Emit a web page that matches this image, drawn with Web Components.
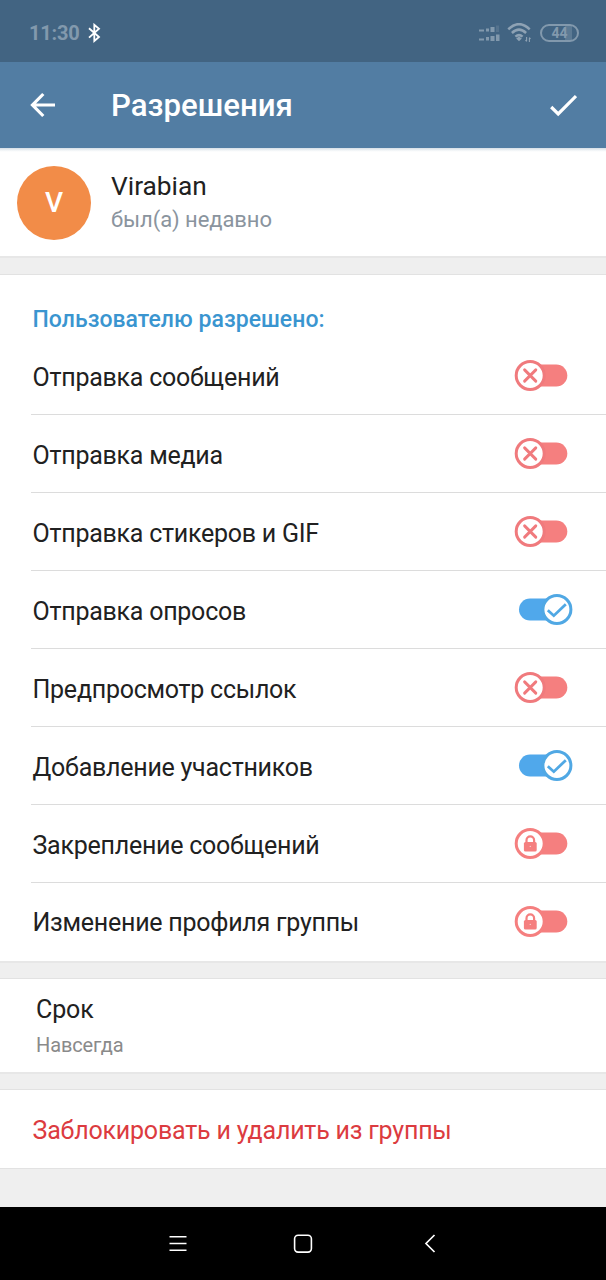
<!DOCTYPE html>
<html lang="ru">
<head>
<meta charset="utf-8">
<title>Разрешения</title>
<style>
  body {
    margin: 0;
    background: #efefef;
    font-family: Roboto, "Noto Sans", sans-serif;
    color: #212121;
  }
</style>
</head>
<body>
<permissions-screen></permissions-screen>

<script>
function makeTemplate(html) {
  const template = document.createElement("template");
  template.innerHTML = html;
  return template;
}

class BaseElement extends HTMLElement {
  constructor() {
    super();
    this._root = this.attachShadow({ mode: "open" });
    this._root.appendChild(this.constructor.template.content.cloneNode(true));
  }
}

class StatusBar extends BaseElement {
  static template = makeTemplate(`
<style>
:host {
  display: flex;
  align-items: center;
  box-sizing: border-box;
  height: 62px;
  padding: 4px 27px 0 29px;
  background: #426482;
  color: #8299ad;
}
svg { display: block; }
.time {
  font-size: 20px;
  font-weight: 700;
  line-height: 24px;
  letter-spacing: -0.2px;
  flex: none;
  width: 59px;
}
.icons {
  display: flex;
  align-items: center;
  margin-left: auto;
}
.battery {
  box-sizing: border-box;
  width: 39px;
  height: 18px;
  margin-left: 8px;
  border: 2px solid #8299ad;
  border-radius: 9px;
  font-size: 14px;
  font-weight: 700;
  line-height: 15px;
  text-align: center;
  background: linear-gradient(90deg, transparent 66%, #5c7a94 66%, #5c7a94 86%, transparent 86%);
}
</style>
<span class="time">11:30</span>
<svg width="13" height="20" viewBox="0 0 13 20" fill="none" stroke="#fff" stroke-width="1.8" stroke-linejoin="miter">
  <path d="M1 5.2L11 14L6.3 18V1.8L11 5.8L1 14.6"/>
</svg>
<div class="icons">
  <svg width="22" height="18" viewBox="0 0 22 18" fill="#8299ad">
    <path d="M1 5.500h5v2H1zM8 4.500h3v3H8zM12.500 3h4v5h-4zM1 14.500h5v2H1zM8 13h3v3.500H8zM12.500 12h4v5h-4zM18 10.500h3.500V17H18z"/>
    <path d="M18 1.500h3V8h-3z" fill="#55738e"/>
  </svg>
  <svg style="margin-left: 7px" width="25" height="20" viewBox="0 0 25 20" fill="none" stroke="#8ea2b4" stroke-width="2.500">
    <path d="M1.300 6.300Q12 -4 22.700 6.300M4.900 10Q12 3.300 19.100 10M8.400 13.600Q12 10.600 15.600 13.600"/>
    <path d="M12 13.600l2.800 2L12 18.200l-2.800-2.600z" fill="#8ea2b4" stroke="none"/>
    <path d="M19.600 14v4M18.500 17l1.100 1.500M22.400 15v4M22.400 14.500l1.100 1.500" stroke-width="1.100"/>
  </svg>
  <div class="battery">44</div>
</div>
`);
}
customElements.define("status-bar", StatusBar);

class AppBar extends BaseElement {
  static template = makeTemplate(`
<style>
:host {
  display: flex;
  align-items: center;
  box-sizing: border-box;
  height: 86px;
  padding: 0 29px 0 30px;
  background: #527da3;
  color: #fff;
}
svg { display: block; flex: none; }
h1 {
  flex: 1;
  margin: 1px 0 0 55px;
  font-size: 31.200px;
  font-weight: 500;
  line-height: 42px;
}
</style>
<svg width="26" height="26" viewBox="0 0 26 26" fill="none" stroke="#fff" stroke-width="3.200">
  <path d="M25 13H3M13.300 2L2.500 13l10.800 11"/>
</svg>
<h1><slot></slot></h1>
<svg width="28" height="24" viewBox="0 0 28 24" fill="none" stroke="#fff" stroke-width="3.200">
  <path d="M2.200 14l7 7L27 3.100"/>
</svg>
`);
}
customElements.define("app-bar", AppBar);

class UserCard extends BaseElement {
  static template = makeTemplate(`
<style>
:host {
  display: flex;
  box-sizing: border-box;
  height: 108px;
  padding: 18px 17px 0;
  background: linear-gradient(#d5dee6, #f8fafb 3px, #fff 4px);
}
.avatar {
  width: 74px;
  height: 74px;
  border-radius: 50%;
  background: #f28c48;
  color: #fff;
  font-size: 28px;
  font-weight: 500;
  line-height: 74px;
  text-align: center;
}
.info { margin: 2px 0 0 20px; }
.name {
  font-size: 26.300px;
  line-height: 36px;
}
.seen {
  padding-top: 1px;
  font-size: 22px;
  letter-spacing: -0.080px;
  line-height: 30px;
  color: #8a949e;
}
</style>
<div class="avatar"><slot name="initial"></slot></div>
<div class="info">
  <div class="name"><slot name="name"></slot></div>
  <div class="seen"><slot name="seen"></slot></div>
</div>
`);
}
customElements.define("user-card", UserCard);

class SectionGap extends BaseElement {
  static template = makeTemplate(`
<style>
:host {
  display: block;
  box-sizing: border-box;
  height: 18px;
  border-top: 2px solid #e7e7e7;
  border-bottom: 1px solid #e2e2e2;
  background: #efefef;
}
</style>
`);
}
customElements.define("section-gap", SectionGap);

class PermissionSwitch extends BaseElement {
  static template = makeTemplate(`
<style>
:host { display: block; width: 60px; height: 32px; }
svg { display: none; }
:host([state="off"]) .off,
:host([state="locked"]) .locked,
:host([state="on"]) .on { display: block; }
</style>
<svg class="off" width="60" height="32" viewBox="0 0 60 32">
  <rect x="10" y="4.500" width="43.300" height="22" rx="11" fill="#f57f7f"/>
  <circle cx="16.200" cy="15.500" r="14" fill="#fff" stroke="#f07a7d" stroke-width="3"/>
  <path d="M10.600 9.900l11.200 11.200M21.800 9.900L10.600 21.100" stroke="#f07a7d" stroke-width="2.900" stroke-linecap="round"/>
</svg>
<svg class="locked" width="60" height="32" viewBox="0 0 60 32">
  <rect x="10" y="4.500" width="43.300" height="22" rx="11" fill="#f57f7f"/>
  <circle cx="16.200" cy="15.500" r="14" fill="#fff" stroke="#f57f7f" stroke-width="3"/>
  <rect x="9.900" y="14" width="12.800" height="9.500" rx="1.600" fill="#f57f7f"/>
  <path d="M12.500 15v-2.800a3.800 3.800 0 0 1 7.600 0V15" fill="none" stroke="#f57f7f" stroke-width="2.200"/>
  <circle cx="16.300" cy="18.400" r="0.700" fill="#fff" opacity="0.600"/>
</svg>
<svg class="on" width="60" height="32" viewBox="0 0 60 32">
  <rect x="5" y="4.500" width="43" height="22" rx="11" fill="#50a8eb"/>
  <circle cx="42.900" cy="15.500" r="14" fill="#fff" stroke="#50a8e4" stroke-width="3"/>
  <path d="M33.800 16.200l6 5.500L51.800 10.200" fill="none" stroke="#50a8e4" stroke-width="2.800"/>
</svg>
`);
}
customElements.define("permission-switch", PermissionSwitch);

class PermissionRow extends BaseElement {
  static template = makeTemplate(`
<style>
:host {
  display: flex;
  justify-content: space-between;
  align-items: center;
  box-sizing: border-box;
  height: 78px;
  margin-left: 31px;
  padding: 0 32px 0 1.500px;
  border-bottom: 1px solid #dcdcdc;
}
:host(:last-of-type) { border-bottom-color: transparent; }
:host(:last-of-type) .label { padding-top: 3px; }
.label {
  font-size: 25px;
  letter-spacing: -0.250px;
  line-height: 30px;
  padding-top: 5px;
}
</style>
<span class="label"><slot></slot></span>
<permission-switch></permission-switch>
`);

  connectedCallback() {
    this._root.querySelector("permission-switch").setAttribute("state", this.getAttribute("state"));
  }
}
customElements.define("permission-row", PermissionRow);

class PermissionList extends BaseElement {
  static template = makeTemplate(`
<style>
:host {
  display: block;
  box-sizing: border-box;
  height: 686px;
  background: #fff;
}
h2 {
  margin: 0;
  padding: 30px 0 2px 32.500px;
  font-size: 23px;
  font-weight: 500;
  letter-spacing: 0.030px;
  line-height: 30px;
  color: #3a95d0;
}
</style>
<h2><slot name="title"></slot></h2>
<slot></slot>
`);
}
customElements.define("permission-list", PermissionList);

class DurationRow extends BaseElement {
  static template = makeTemplate(`
<style>
:host {
  display: block;
  box-sizing: border-box;
  height: 93px;
  padding: 15px 36px 0;
  background: #fff;
}
.label { font-size: 25px; letter-spacing: -0.100px; line-height: 32px; }
.value {
  padding-top: 5px;
  font-size: 20px;
  letter-spacing: -0.120px;
  line-height: 28px;
  color: #8a8a8a;
}
</style>
<div class="label"><slot></slot></div>
<div class="value"><slot name="value"></slot></div>
`);
}
customElements.define("duration-row", DurationRow);

class DangerButton extends BaseElement {
  static template = makeTemplate(`
<style>
:host {
  display: block;
  box-sizing: border-box;
  height: 79px;
  padding-left: 32.500px;
  border-bottom: 1px solid #e2e2e2;
  background: #fff;
  color: #dc3b40;
  font-size: 25px;
  letter-spacing: -0.200px;
  line-height: 82px;
}
</style>
<slot></slot>
`);
}
customElements.define("danger-button", DangerButton);

class NavBar extends BaseElement {
  static template = makeTemplate(`
<style>
:host {
  display: flex;
  justify-content: center;
  align-items: center;
  gap: 106px;
  height: 73px;
  margin-top: auto;
  background: #000;
}
svg { display: block; }
</style>
<svg width="20" height="20" viewBox="0 0 20 20" fill="none" stroke="#fff" stroke-width="1.600">
  <path d="M2.500 2.800h17M2.500 9.500h17M2.500 16.300h17"/>
</svg>
<svg width="20" height="20" viewBox="0 0 20 20" fill="none" stroke="#fff" stroke-width="1.600">
  <rect x="1.600" y="1.300" width="16.800" height="16.800" rx="3.500"/>
</svg>
<svg width="20" height="20" viewBox="0 0 20 20" fill="none" stroke="#fff" stroke-width="1.700">
  <path d="M15.500 1L7 9.500L15.500 18"/>
</svg>
`);
}
customElements.define("nav-bar", NavBar);

class PermissionsScreen extends BaseElement {
  static template = makeTemplate(`
<style>
:host {
  display: flex;
  flex-direction: column;
  height: 1280px;
}
:host > * { flex: none; }
</style>
<status-bar></status-bar>
<app-bar>Разрешения</app-bar>
<user-card>
  <span slot="initial">V</span>
  <span slot="name">Virabian</span>
  <span slot="seen">был(а) недавно</span>
</user-card>
<section-gap style="height: 19px"></section-gap>
<permission-list>
  <span slot="title">Пользователю разрешено:</span>
  <permission-row state="off">Отправка сообщений</permission-row>
  <permission-row state="off">Отправка медиа</permission-row>
  <permission-row state="off">Отправка стикеров и GIF</permission-row>
  <permission-row state="on">Отправка опросов</permission-row>
  <permission-row state="off">Предпросмотр ссылок</permission-row>
  <permission-row state="on">Добавление участников</permission-row>
  <permission-row state="locked">Закрепление сообщений</permission-row>
  <permission-row state="locked">Изменение профиля группы</permission-row>
</permission-list>
<section-gap></section-gap>
<duration-row>Срок<span slot="value">Навсегда</span></duration-row>
<section-gap></section-gap>
<danger-button>Заблокировать и удалить из группы</danger-button>
<nav-bar></nav-bar>
`);
}
customElements.define("permissions-screen", PermissionsScreen);
</script>
</body>
</html>
